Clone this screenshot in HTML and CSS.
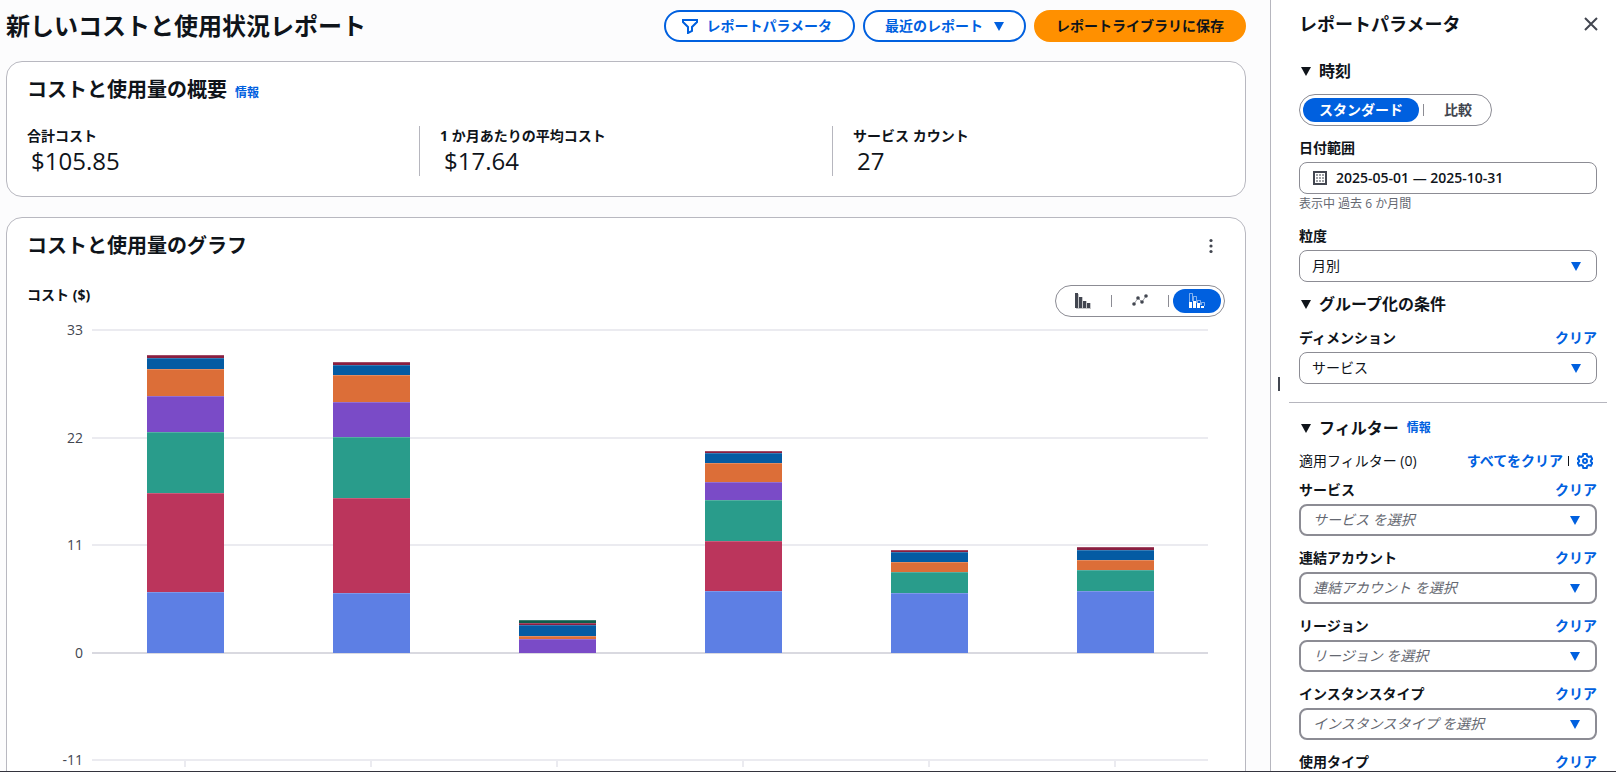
FILE: index.html
```html
<!DOCTYPE html>
<html lang="ja">
<head>
    <meta charset="UTF-8">
    <meta name="viewport" content="width=device-width, initial-scale=1.0">
    <title>新しいコストと使用状況レポート</title>
    <link rel="stylesheet" href="styles.css">
</head>
<body>
    <main class="main">
        <header class="page-header">
            <h1>新しいコストと使用状況レポート</h1>
            <div class="actions">
                <button class="btn btn-filter" type="button">
                    <svg class="icon" viewBox="0 0 16 16"><path d="M1 2h14v2l-5 5v4l-4 2V9L1 4z" /></svg>
                    レポートパラメータ
                </button>
                <button class="btn" type="button">最近のレポート
                    <svg class="caret" viewBox="0 0 10 9"><path d="M0 0h10L5 9z" /></svg>
                </button>
                <button class="btn btn-primary" type="button">レポートライブラリに保存</button>
            </div>
        </header>

        <section class="card summary">
            <div class="card-title">
                <h2>コストと使用量の概要</h2>
                <a class="info" href="#">情報</a>
            </div>
            <dl class="metrics">
                <div class="metric"><dt>合計コスト</dt><dd>$105.85</dd></div>
                <div class="metric"><dt>1 か月あたりの平均コスト</dt><dd>$17.64</dd></div>
                <div class="metric"><dt>サービス カウント</dt><dd>27</dd></div>
            </dl>
        </section>

        <section class="card graph">
            <div class="card-title">
                <h2>コストと使用量のグラフ</h2>
                <button class="menu-btn" type="button" aria-label="メニュー">
                    <svg class="icon" viewBox="0 0 16 16"><circle cx="8" cy="2.5" r="1.6" /><circle cx="8" cy="8" r="1.6" /><circle cx="8" cy="13.5" r="1.6" /></svg>
                </button>
            </div>
            <div class="graph-toolbar">
                <h3>コスト ($)</h3>
                <div class="segmented">
                    <button type="button" aria-label="棒グラフ">
                        <svg class="icon chart-icon" viewBox="0 0 16 16"><path class="shade" d="M1 1h3v3h4v4h4v2h4v6H1z" /><path d="M0 0h3v15H0zM4 4h3v11H4zM8 8h3v7H8zM12 10h3v5h-3z" /></svg>
                    </button>
                    <i class="sep"></i>
                    <button type="button" aria-label="折れ線グラフ">
                        <svg class="icon chart-icon" viewBox="0 0 16 16"><path class="line" d="M2 11l4-6 4 4 4-6" /><circle cx="2" cy="11" r="1.8" /><circle cx="6" cy="5" r="1.8" /><circle cx="10" cy="9" r="1.8" /><circle cx="14" cy="3" r="1.8" /></svg>
                    </button>
                    <i class="sep"></i>
                    <button class="active" type="button" aria-label="積み上げ棒グラフ">
                        <svg class="icon chart-icon" viewBox="0 0 16 16"><path class="outline" d="M.5 9V.5h3V8M4.5 8V3.5h3V10M8.5 10V7.5h3V12M12.5 12V9.5h3V13" /><path d="M0 9h3v6H0zM4 8h3v7H4zM8 10h3v5H8zM12 13h3v2h-3z" /></svg>
                    </button>
                </div>
            </div>
            <div class="chart">
                <div class="y-axis">
                    <span>33</span><span>22</span><span>11</span><span>0</span><span>-11</span>
                </div>
                <div class="plot">
                    <div class="gridlines"><i></i><i></i><i></i><i class="zero"></i><i></i></div>
                    <div class="bars">
                        <div class="bar">
                            <div class="s-wine" style="height: 3px"></div>
                            <div class="s-navy" style="height: 11px"></div>
                            <div class="s-orange" style="height: 27px"></div>
                            <div class="s-purple" style="height: 36px"></div>
                            <div class="s-green" style="height: 61px"></div>
                            <div class="s-red" style="height: 99px"></div>
                            <div class="s-blue" style="height: 61px"></div>
                        </div>
                        <div class="bar">
                            <div class="s-wine" style="height: 3px"></div>
                            <div class="s-navy" style="height: 10px"></div>
                            <div class="s-orange" style="height: 27px"></div>
                            <div class="s-purple" style="height: 35px"></div>
                            <div class="s-green" style="height: 61px"></div>
                            <div class="s-red" style="height: 95px"></div>
                            <div class="s-blue" style="height: 60px"></div>
                        </div>
                        <div class="bar">
                            <div class="s-forest" style="height: 3px"></div>
                            <div class="s-wine" style="height: 2px"></div>
                            <div class="s-navy" style="height: 11px"></div>
                            <div class="s-orange" style="height: 3px"></div>
                            <div class="s-purple" style="height: 14px"></div>
                        </div>
                        <div class="bar">
                            <div class="s-wine" style="height: 2px"></div>
                            <div class="s-navy" style="height: 10px"></div>
                            <div class="s-orange" style="height: 19px"></div>
                            <div class="s-purple" style="height: 18px"></div>
                            <div class="s-green" style="height: 41px"></div>
                            <div class="s-red" style="height: 50px"></div>
                            <div class="s-blue" style="height: 62px"></div>
                        </div>
                        <div class="bar">
                            <div class="s-wine" style="height: 2px"></div>
                            <div class="s-navy" style="height: 10px"></div>
                            <div class="s-orange" style="height: 10px"></div>
                            <div class="s-green" style="height: 21px"></div>
                            <div class="s-blue" style="height: 60px"></div>
                        </div>
                        <div class="bar">
                            <div class="s-wine" style="height: 3px"></div>
                            <div class="s-navy" style="height: 10px"></div>
                            <div class="s-orange" style="height: 10px"></div>
                            <div class="s-green" style="height: 21px"></div>
                            <div class="s-blue" style="height: 62px"></div>
                        </div>
                    </div>
                    <div class="ticks"><i></i><i></i><i></i><i></i><i></i><i></i></div>
                </div>
            </div>
        </section>
    </main>

    <div class="resize-handle"></div>

    <aside class="panel">
        <div class="panel-header">
            <h2>レポートパラメータ</h2>
            <button class="close-btn" type="button" aria-label="閉じる">
                <svg class="icon" viewBox="0 0 16 16"><path d="M2 2l12 12M14 2L2 14" /></svg>
            </button>
        </div>

        <h3 class="group-title"><svg class="caret" viewBox="0 0 10 9"><path d="M0 0h10L5 9z" /></svg>時刻</h3>
        <div class="segmented mode">
            <button class="active" type="button">スタンダード</button>
            <i class="sep"></i>
            <button type="button">比較</button>
        </div>
        <div class="field">
            <label for="date-range">日付範囲</label>
            <button class="control date" id="date-range" type="button">
                <svg class="icon" viewBox="0 0 16 16"><path d="M2 2h12v12H2z" /><path class="dots" d="M4 5h2M7 5h2M10 5h2M4 8h2M7 8h2M10 8h2M4 11h2M7 11h2M10 11h2" /></svg>
                2025-05-01 — 2025-10-31
            </button>
            <p class="hint">表示中 過去 6 か月間</p>
        </div>
        <div class="field">
            <label for="granularity">粒度</label>
            <div class="select">
                <select class="control" id="granularity"><option>月別</option></select>
                <svg class="caret" viewBox="0 0 10 9"><path d="M0 0h10L5 9z" /></svg>
            </div>
        </div>

        <h3 class="group-title group-by"><svg class="caret" viewBox="0 0 10 9"><path d="M0 0h10L5 9z" /></svg>グループ化の条件</h3>
        <div class="field">
            <div class="label-row"><label for="dimension">ディメンション</label><a href="#">クリア</a></div>
            <div class="select">
                <select class="control" id="dimension"><option>サービス</option></select>
                <svg class="caret" viewBox="0 0 10 9"><path d="M0 0h10L5 9z" /></svg>
            </div>
        </div>

        <hr>

        <h3 class="group-title"><svg class="caret" viewBox="0 0 10 9"><path d="M0 0h10L5 9z" /></svg>フィルター <a class="info" href="#">情報</a></h3>
        <div class="applied">
            <span>適用フィルター (0)</span>
            <div class="applied-actions">
                <a href="#">すべてをクリア</a>
                <span class="pipe"></span>
                <button class="gear-btn" type="button" aria-label="設定">
                    <svg class="icon" viewBox="0 0 16 16"><path d="M6.3 1h3.4l.5 2 1.6.9 2-.6 1.5 2.7-1.4 1.4v1.2l1.4 1.4-1.5 2.7-2-.6-1.6.9-.5 2H6.3l-.5-2-1.6-.9-2 .6L.7 10l1.4-1.4V7.4L.7 6l1.5-2.7 2 .6L5.8 3z" /><circle cx="8" cy="8" r="2" /></svg>
                </button>
            </div>
        </div>
        <div class="field filter">
            <div class="label-row"><label for="f-service">サービス</label><a href="#">クリア</a></div>
            <div class="select">
                <select class="control" id="f-service"><option>サービス を選択</option></select>
                <svg class="caret" viewBox="0 0 10 9"><path d="M0 0h10L5 9z" /></svg>
            </div>
        </div>
        <div class="field filter">
            <div class="label-row"><label for="f-account">連結アカウント</label><a href="#">クリア</a></div>
            <div class="select">
                <select class="control" id="f-account"><option>連結アカウント を選択</option></select>
                <svg class="caret" viewBox="0 0 10 9"><path d="M0 0h10L5 9z" /></svg>
            </div>
        </div>
        <div class="field filter">
            <div class="label-row"><label for="f-region">リージョン</label><a href="#">クリア</a></div>
            <div class="select">
                <select class="control" id="f-region"><option>リージョン を選択</option></select>
                <svg class="caret" viewBox="0 0 10 9"><path d="M0 0h10L5 9z" /></svg>
            </div>
        </div>
        <div class="field filter">
            <div class="label-row"><label for="f-instance">インスタンスタイプ</label><a href="#">クリア</a></div>
            <div class="select">
                <select class="control" id="f-instance"><option>インスタンスタイプ を選択</option></select>
                <svg class="caret" viewBox="0 0 10 9"><path d="M0 0h10L5 9z" /></svg>
            </div>
        </div>
        <div class="field filter">
            <div class="label-row"><label for="f-usage">使用タイプ</label><a href="#">クリア</a></div>
            <div class="select">
                <select class="control" id="f-usage"><option>使用タイプ を選択</option></select>
                <svg class="caret" viewBox="0 0 10 9"><path d="M0 0h10L5 9z" /></svg>
            </div>
        </div>
    </aside>
</body>
</html>
```

FILE: styles.css
```css
:root {
    --text: #0f141a;
    --text-soft: #424650;
    --blue: #0060df;
    --border: #8c8c94;
    --divider: #b6b6be;
    --orange: #ff9000;
}

* {
    box-sizing: border-box;
}

body {
    margin: 0;
    height: 100vh;
    display: flex;
    overflow: hidden;
    background: #fcfcfd;
    color: var(--text);
    font: 14px/20px "Open Sans", "Noto Sans CJK JP", sans-serif;
    border-bottom: 1px solid #33333d;
}

h1,
h2,
h3,
p,
dl,
dd {
    margin: 0;
}

button,
select {
    font: inherit;
    color: inherit;
}

button {
    cursor: pointer;
}

a {
    color: var(--blue);
    font-weight: 700;
    text-decoration: none;
}

svg {
    display: block;
    flex: none;
}

.icon {
    width: 16px;
    height: 16px;
    fill: none;
    stroke: currentColor;
    stroke-width: 2;
}

.caret {
    width: 10px;
    height: 9px;
    fill: currentColor;
}

.main {
    flex: 1;
    min-width: 0;
    padding: 10px 24px 0 6px;
}

.page-header {
    display: flex;
    justify-content: space-between;
    align-items: center;
    margin-bottom: 19px;
}

h1 {
    font-size: 24px;
    line-height: 32px;
    font-weight: 700;
}

.actions {
    display: flex;
    gap: 8px;
}

.btn {
    display: flex;
    align-items: center;
    gap: 11px;
    height: 32px;
    padding: 0 20px;
    border: 2px solid var(--blue);
    border-radius: 16px;
    background: #fff;
    color: var(--blue);
    font-weight: 700;
}

.btn-filter {
    gap: 8px;
    padding: 0 21px 0 16px;
}

.btn-primary {
    border-color: var(--orange);
    background: var(--orange);
    color: var(--text);
}

.card {
    background: #fff;
    border: 1px solid #b8b8c0;
    border-radius: 16px;
    padding: 16px 20px;
    margin-bottom: 20px;
}

.summary {
    padding-bottom: 20px;
}

.card-title {
    display: flex;
    align-items: baseline;
    gap: 8px;
}

.card-title h2 {
    font-size: 20px;
    line-height: 24px;
    font-weight: 700;
}

.info {
    font-size: 12px;
}

.metrics {
    display: flex;
    margin-top: 23px;
}

.metric {
    flex: 1;
    height: 50px;
    padding: 0 20px;
    border-left: 1px solid var(--divider);
}

.metric:first-child {
    padding-left: 0;
    border-left: 0;
}

.metric:last-child {
    padding-right: 0;
}

.metric dt {
    font-weight: 700;
}

.metric dd {
    padding-left: 4px;
    font-size: 24px;
    line-height: 30px;
    font-weight: 500;
}

.graph {
    margin-bottom: 0;
}

.graph .card-title {
    justify-content: space-between;
    align-items: center;
}

.menu-btn,
.close-btn,
.gear-btn {
    padding: 0;
    border: 0;
    background: none;
    color: var(--text-soft);
}

.menu-btn {
    margin-right: 6px;
}

.menu-btn .icon {
    fill: currentColor;
    stroke: none;
}

.graph-toolbar {
    display: flex;
    justify-content: space-between;
    margin-top: 27px;
}

.graph-toolbar h3 {
    font-size: 14px;
}

.segmented {
    display: flex;
    align-items: center;
    height: 32px;
    padding: 3px;
    border: 1px solid var(--border);
    border-radius: 16px;
    background: #fff;
}

.segmented button {
    height: 24px;
    padding: 0 16px;
    border: 0;
    border-radius: 12px;
    background: none;
    color: var(--text-soft);
    font-weight: 700;
}

.segmented button.active {
    background: var(--blue);
    color: #fff;
}

.sep {
    width: 1px;
    height: 12px;
    margin: 0 4px;
    background: var(--border);
}

.segmented .chart-icon {
    fill: currentColor;
    stroke: none;
}

.chart-icon .shade {
    opacity: 0.3;
}

.chart-icon .line,
.chart-icon .outline {
    fill: none;
    stroke: currentColor;
    stroke-width: 1;
    opacity: 0.5;
}

.chart {
    display: flex;
    margin-top: 12px;
}

.y-axis {
    display: flex;
    flex-direction: column;
    justify-content: space-between;
    width: 57px;
    height: 450px;
    margin-top: -9px;
    padding-right: 1px;
    color: var(--text-soft);
    text-align: right;
}

.plot {
    position: relative;
    flex: 1;
    height: 432px;
    margin: 0 17px 0 8px;
}

.gridlines {
    position: absolute;
    inset: 0;
    display: flex;
    flex-direction: column;
    justify-content: space-between;
}

.gridlines i {
    height: 2px;
    background: #ebebf0;
}

.gridlines .zero {
    background: #d9d9e0;
}

.bars {
    position: relative;
    display: flex;
    align-items: flex-end;
    height: 324px;
}

.bar {
    width: 77px;
    margin: 0 auto;
}

.bar div {
    box-shadow: inset 0 1px rgba(255, 255, 255, 0.2);
}

.s-wine { background: #8a1f40; }
.s-navy { background: #045ba3; }
.s-orange { background: #dc6e38; }
.s-purple { background: #7a4bc7; }
.s-green { background: #299c8b; }
.s-red { background: #bb355c; }
.s-blue { background: #5d7fe4; }
.s-forest { background: #0c5c4c; }

.ticks {
    display: flex;
    justify-content: space-around;
    padding-top: 108px;
}

.ticks i {
    width: 2px;
    height: 6px;
    background: #ebebf0;
}

.resize-handle {
    display: flex;
    align-items: center;
    width: 18px;
    padding: 0 0 4px 7px;
    background: #fff;
    border-left: 1px solid var(--divider);
}

.resize-handle::before {
    content: "";
    width: 2px;
    height: 14px;
    background: var(--text-soft);
}

.panel {
    width: 328px;
    padding: 12px 19px 0 11px;
    background: #fff;
    overflow: hidden;
}

.panel-header {
    display: flex;
    justify-content: space-between;
    align-items: center;
    margin-bottom: 23px;
}

.panel-header h2 {
    font-size: 18px;
    line-height: 24px;
}

.close-btn {
    margin-right: -2px;
}

.close-btn .icon {
    stroke-width: 2;
}

.group-title {
    display: flex;
    align-items: center;
    gap: 8px;
    padding-left: 2px;
    font-size: 16px;
    line-height: 24px;
}

.mode {
    width: max-content;
    margin: 11px 0 12px;
}

.field {
    margin-bottom: 12px;
}

.field label {
    display: block;
    font-weight: 700;
    line-height: 20px;
    margin-bottom: 4px;
}

.label-row {
    display: flex;
    justify-content: space-between;
}

.control {
    width: 100%;
    height: 32px;
    padding: 0 12px;
    border: 1px solid var(--border);
    border-radius: 8px;
    background: #fff;
    text-align: left;
    appearance: none;
}

.date {
    display: flex;
    align-items: center;
    gap: 8px;
    font-weight: 600;
}

.date .icon {
    color: var(--text-soft);
    stroke-width: 2;
}

.date .dots {
    stroke-width: 1;
}

.hint {
    color: #656871;
    font-size: 12px;
    line-height: 20px;
}

.select {
    position: relative;
}

.select .caret {
    position: absolute;
    top: 12px;
    right: 16px;
    color: var(--blue);
    pointer-events: none;
}

.group-by {
    margin: -2px 0 12px;
}

hr {
    height: 1px;
    margin: 18px -10px 13px;
    border: 0;
    background: var(--divider);
}

.applied {
    display: flex;
    justify-content: space-between;
    margin: 11px 0 9px;
}

.applied-actions {
    display: flex;
    align-items: center;
    gap: 5px;
    padding-right: 4px;
}

.pipe {
    width: 1px;
    height: 10px;
    background: var(--text);
}

.gear-btn {
    margin-left: 3px;
    color: var(--blue);
}

.gear-btn .icon {
    stroke-width: 2;
}

.filter .control {
    border-width: 2px;
    color: #656871;
    font-style: italic;
}

.filter .caret {
    right: 17px;
}
```
